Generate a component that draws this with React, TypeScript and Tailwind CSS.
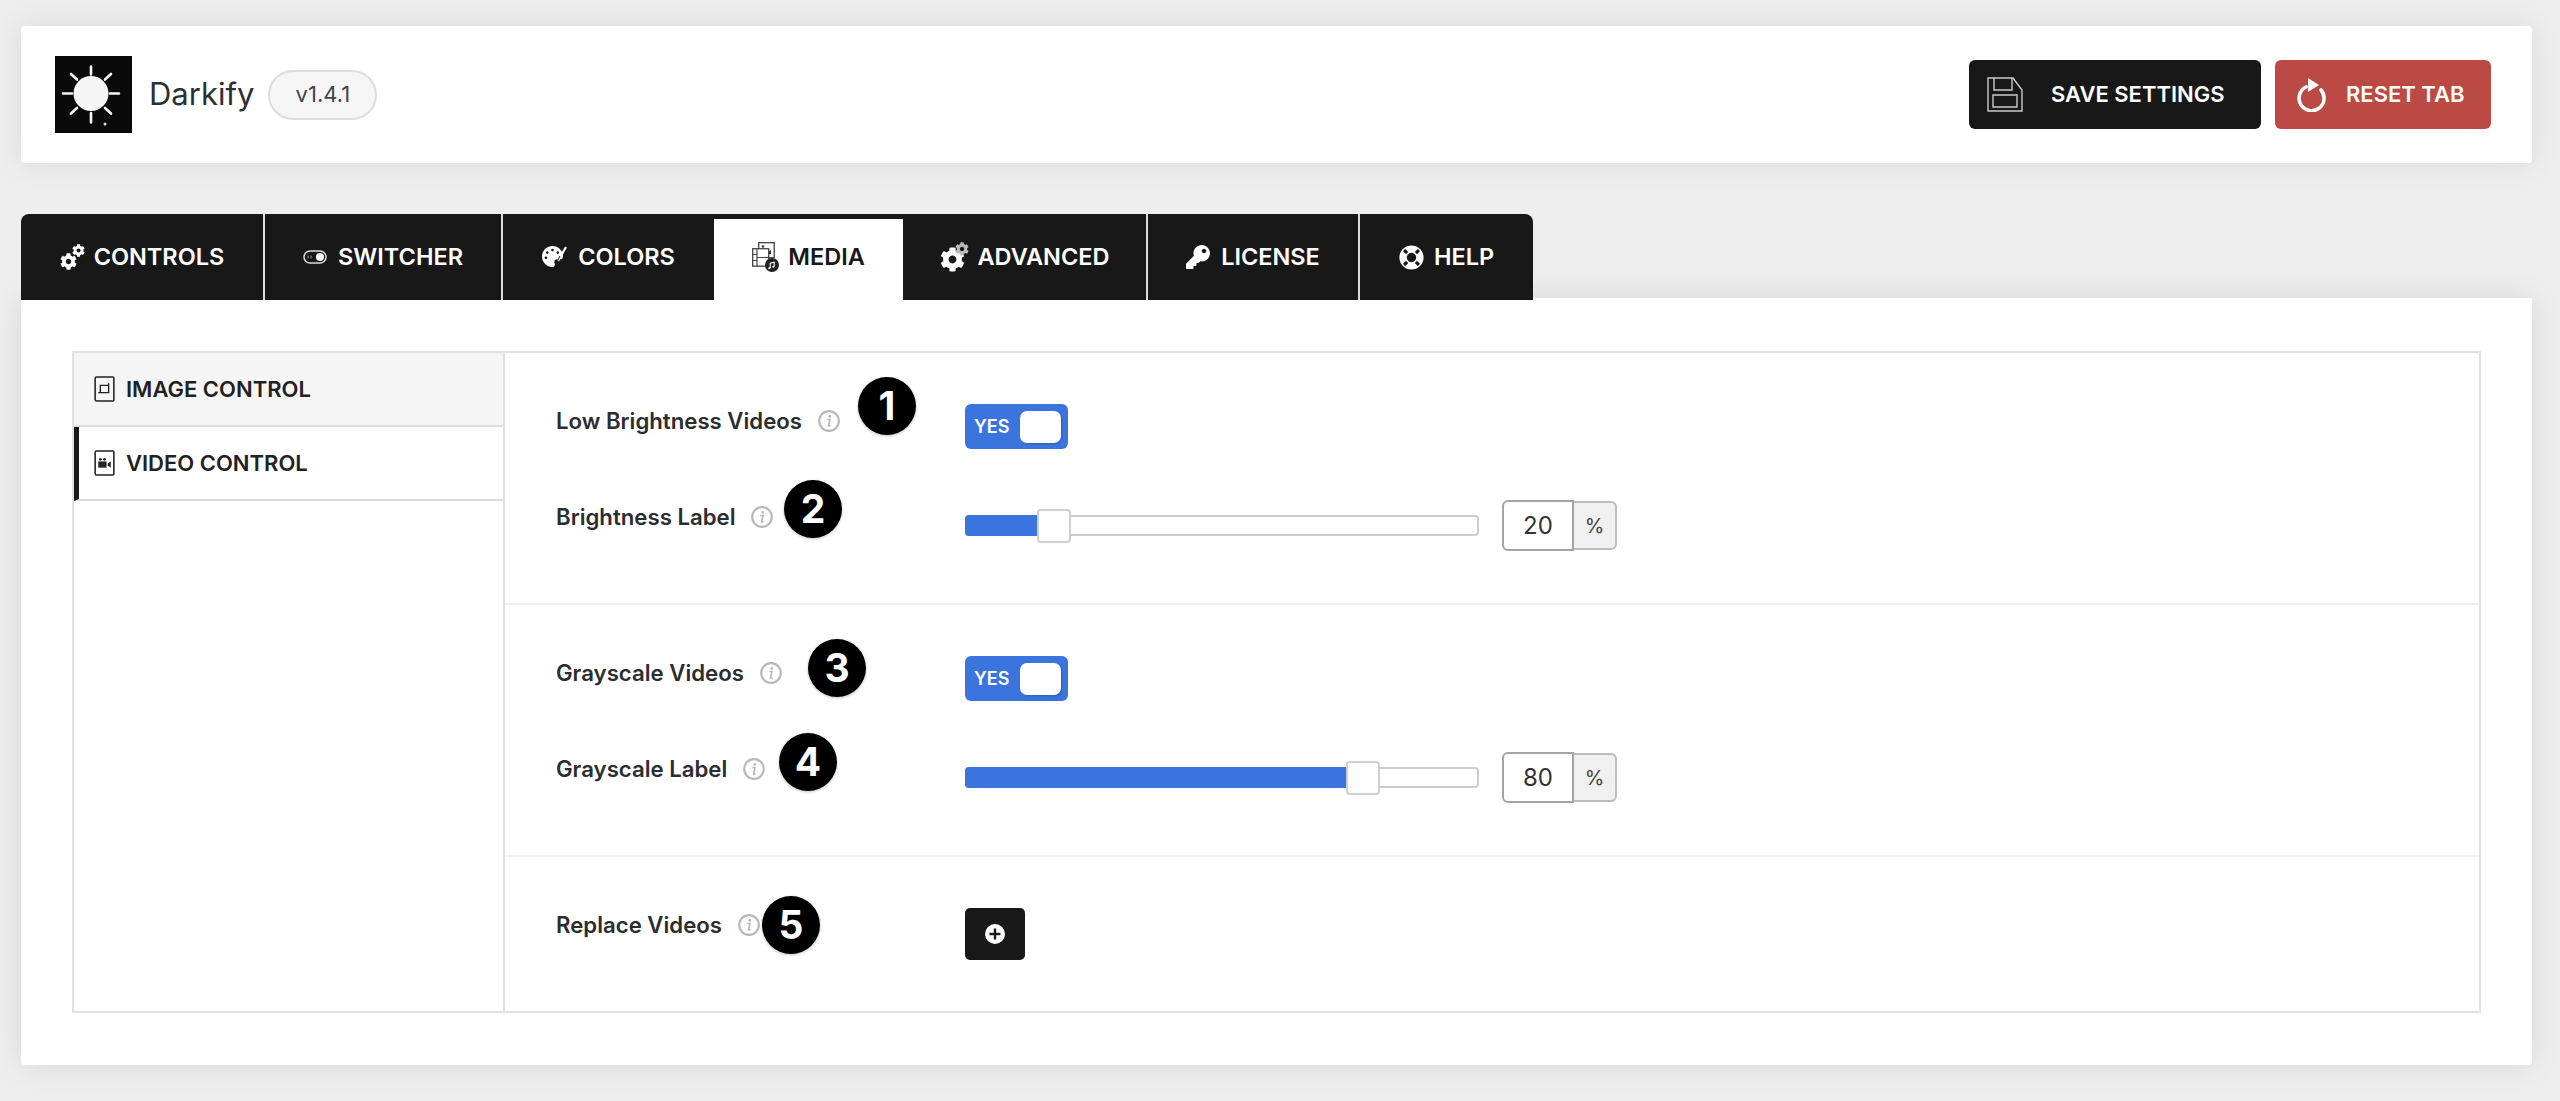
import React from "react";
import { FaCog, FaKey, FaLifeRing, FaPalette } from "react-icons/fa";

const SunLogo = () => (
  <svg viewBox="0 0 77 77" className="w-[77px] h-[77px] shrink-0 bg-[#0a0a0a]">
    <circle cx="36" cy="37.500" r="17.500" fill="#f5f5f5" />
    <g stroke="#f5f5f5" strokeWidth="2.600" strokeLinecap="round">
      <path d="M36 10.500v8M36 57v9.500M8 37.500h9M55 37.500h9M16 18l6 5.500M50 52l6 5.500M56 18l-6 5.500M22 52l-6 5.500" />
    </g>
    <circle cx="50" cy="68" r="1.500" fill="#ddd" />
  </svg>
);

const SaveIcon = () => (
  <svg viewBox="0 0 36 35" className="w-[36px] h-[35px]" fill="none" stroke="#c9c9c9" strokeWidth="1.400">
    <path d="M1 1h25l9 12v21H1z" />
    <path d="M7 1v12h18V1M6 18h24v12H6z" />
  </svg>
);

const ResetIcon = () => (
  <svg viewBox="0 0 32 34" className="w-[32px] h-[34px]" fill="none">
    <path d="M11 9a12.500 12.500 0 1 0 15 3" stroke="#fff" strokeWidth="3.600" strokeLinecap="round" />
    <path d="M13 0l11 7-11 7z" fill="#fff" />
  </svg>
);

const TwoGears = () => (
  <span className="relative block w-[25px] h-[26px]">
    <FaCog className="absolute left-0 bottom-0 text-[17px]" />
    <FaCog className="absolute right-0 top-0 text-[13px]" />
  </span>
);

const SwitchIcon = () => (
  <svg viewBox="0 0 24 14" className="w-[24px] h-[14px]" fill="none">
    <rect x="1" y="1" width="22" height="12" rx="6" stroke="#ddd" strokeWidth="1.500" />
    <circle cx="17" cy="7" r="4" fill="#fff" />
    <path d="M5 5.500v3M8 5.500v3" stroke="#999" />
  </svg>
);

const PaletteIcon = () => (
  <span className="relative block w-[25px] h-[22px]">
    <FaPalette className="absolute left-0 top-0 text-[21px]" />
    <svg viewBox="0 0 12 20" className="absolute right-0 top-0 w-[12px] h-[20px]" fill="none">
      <path d="M11 1L3 15" stroke="#fff" strokeWidth="2.200" />
      <path d="M5 10L1 18" stroke="#181818" strokeWidth="1" />
    </svg>
  </span>
);

const MediaIcon = () => (
  <svg viewBox="0 0 27 30" className="w-[27px] h-[30px]">
    <rect x="6.700" y="0.700" width="15.500" height="15" fill="#fff" stroke="#444" strokeWidth="1.300" />
    <path d="M9 12l4-5 3 3 3-2v4z" fill="#333" />
    <circle cx="11" cy="4.500" r="1.300" fill="#333" />
    <rect x="0.700" y="6.700" width="16" height="17.500" fill="#fff" stroke="#444" strokeWidth="1.300" />
    <path d="M5 7v17M0.700 12.500h4M0.700 18.500h4M5 15.500h11.700" stroke="#444" strokeWidth="1.200" />
    <circle cx="20" cy="23" r="7" fill="#222" />
    <path d="M18.200 26.300v-5l4-1v4.500" fill="none" stroke="#fff" strokeWidth="1.100" />
    <circle cx="17.200" cy="26.300" r="1" fill="#fff" />
    <circle cx="21.200" cy="24.800" r="1" fill="#fff" />
  </svg>
);

const AdvancedIcon = () => (
  <span className="relative block w-[29px] h-[30px]">
    <FaCog className="absolute left-0 bottom-0 text-[25px]" />
    <FaCog className="absolute right-0 top-0 text-[14px] text-[#bbb]" />
  </span>
);

const InfoIcon = () => (
  <svg viewBox="0 0 22 22" className="w-[22px] h-[22px] shrink-0" fill="none">
    <circle cx="11" cy="11" r="9.800" stroke="#b9b9b9" strokeWidth="2.200" />
    <circle cx="11.800" cy="6.400" r="1.400" fill="#b9b9b9" />
    <path d="M9.300 9.500h2.600l-1.300 6.300h1.900" stroke="#b9b9b9" strokeWidth="1.700" />
  </svg>
);

const DocIcon = ({ video }: { video?: boolean }) => (
  <svg viewBox="0 0 20 25" className="w-[21px] h-[26px] shrink-0" fill="none">
    <path d="M2.500 1H18a1 1 0 0 1 1 1v21a1 1 0 0 1-1 1H2.500A1.500 1.500 0 0 1 1 22.500V2.500A1.500 1.500 0 0 1 2.500 1z" stroke="#222" strokeWidth="1.500" />
    {video ? (
      <g fill="#222">
        <rect x="4" y="11" width="8" height="6" />
        <circle cx="6" cy="9" r="1.300" />
        <circle cx="10" cy="9" r="1.300" />
        <path d="M13 13l3-2v6l-3-2z" />
      </g>
    ) : (
      <path d="M6 9h8v7H6zM4 16h2M14 9V7" stroke="#222" strokeWidth="1.300" />
    )}
  </svg>
);

const tabs = [
  { label: "CONTROLS", icon: <TwoGears />, width: "w-[244px]", gap: "gap-[9px]" },
  { label: "SWITCHER", icon: <SwitchIcon />, width: "w-[238px]", gap: "gap-[11px]" },
  { label: "COLORS", icon: <PaletteIcon />, width: "w-[211px]", gap: "gap-[11px]" },
  { label: "MEDIA", icon: <MediaIcon />, width: "w-[189px]", gap: "gap-[9px]", active: true },
  { label: "ADVANCED", icon: <AdvancedIcon />, width: "w-[245px]", gap: "gap-[9px]" },
  { label: "LICENSE", icon: <FaKey className="text-[24px]" />, width: "w-[212px]", gap: "gap-[11px]" },
  { label: "HELP", icon: <FaLifeRing className="text-[25px]" />, width: "w-[173px]", gap: "gap-[10px]" },
];

const Badge = ({ n, pos }: { n: number; pos: string }) => (
  <span className={`absolute ${pos} w-[58px] h-[58px] rounded-full bg-black text-white flex items-center justify-center text-[39px] font-bold shadow-[0_1px_3px_rgba(0,0,0,0.25)]`}>
    {n}
  </span>
);

const Label = ({ text, n, pos }: { text: string; n: number; pos: string }) => (
  <div className="relative w-[409px] h-[34px] flex items-center gap-[16px] text-[22.200px] font-semibold text-[#2b2d2f] shrink-0">
    <span>{text}</span>
    <InfoIcon />
    <Badge n={n} pos={pos} />
  </div>
);

const Toggle = () => (
  <div className="w-[103px] h-[45px] rounded-[6px] bg-[#3b74dc] flex items-center pl-[9px] pr-[7px] justify-between">
    <span className="text-white text-[18px] font-semibold">YES</span>
    <span className="w-[41px] h-[32px] rounded-[7px] bg-white shadow-[1px_1px_2px_rgba(0,0,0,0.2)]" />
  </div>
);

const Slider = ({ value, fill, knob }: { value: number; fill: string; knob: string }) => (
  <div className="flex items-center h-[51px]">
    <div className="relative w-[514px] h-[21px] rounded-[4px] border-2 border-[#cccccc] bg-white">
      <div className={`absolute -left-[2px] -top-[2px] -bottom-[2px] ${fill} rounded-l-[4px] bg-[#3b74dc]`} />
      <div className={`absolute ${knob} -top-[8px] w-[34px] h-[34px] rounded-[4px] border-2 border-[#cfcfcf] bg-white`} />
    </div>
    <div className="ml-[23px] w-[72px] h-[51px] rounded-l-[6px] border-2 border-[#a5a5a5] bg-white flex items-center justify-center text-[24px] text-[#333]">
      {value}
    </div>
    <div className="w-[43px] h-[49px] rounded-r-[6px] border-2 border-l-0 border-[#bdbdbd] bg-[#f0f0f0] flex items-center justify-center text-[20px] text-[#444]">
      %
    </div>
  </div>
);

const App: React.FC = () => {
  return (
    <div className="h-[1101px] overflow-hidden bg-[#eeeeee] pt-[26px] pl-[21px] pr-[28px] font-['Inter',sans-serif]">
      <header className="h-[137px] bg-white rounded-[4px] shadow-[0_0_30px_rgba(0,0,0,0.09)] flex items-center justify-between pl-[34px] pr-[41px]">
        <div className="flex items-center">
          <SunLogo />
          <span className="ml-[17px] text-[31px] text-[#2c2f33]">Darkify</span>
          <span className="ml-[14px] w-[109px] h-[50px] rounded-full border-2 border-[#dddddd] bg-[#f6f6f6] flex items-center justify-center text-[22px] text-[#444]">
            v1.4.1
          </span>
        </div>
        <div className="flex gap-[14px]">
          <button className="w-[292px] h-[69px] rounded-[6px] bg-[#181818] flex items-center pl-[18px] text-white text-[22px] font-semibold">
            <SaveIcon />
            <span className="ml-[28px]">SAVE SETTINGS</span>
          </button>
          <button className="w-[216px] h-[69px] rounded-[6px] bg-[#bb4a44] flex items-center pl-[20px] text-white text-[22px] font-semibold">
            <ResetIcon />
            <span className="ml-[19px]">RESET TAB</span>
          </button>
        </div>
      </header>

      <nav className="relative z-10 mt-[51px] h-[86px] flex w-fit text-[23.500px] font-semibold">
        {tabs.map((tab, i) => (
          <div
            key={tab.label}
            className={`${tab.width} ${tab.gap} flex items-center justify-center ${
              tab.active
                ? "bg-white text-[#181818] border-t-[5px] border-[#181818] pb-[5px]"
                : "bg-[#181818] text-white"
            } ${i < tabs.length - 1 && !tab.active && !tabs[i + 1].active ? "border-r-2 border-[#dddddd]" : ""} ${i === 0 ? "rounded-tl-[8px]" : ""} ${i === tabs.length - 1 ? "rounded-tr-[8px]" : ""}`}
          >
            {tab.icon}
            <span>{tab.label}</span>
          </div>
        ))}
      </nav>

      <main className="-mt-[2px] h-[767px] bg-white rounded-b-[4px] shadow-[0_0_30px_rgba(0,0,0,0.1)] px-[51px] pt-[53px]">
        <div className="h-[662px] border-2 border-[#dfe1e3] flex">
          <aside className="w-[431px] shrink-0 border-r-2 border-[#dfdfdf] text-[22px] font-semibold text-[#1f2124]">
            <div className="h-[74px] bg-[#f5f5f5] border-b-2 border-[#dddddd] flex items-center gap-[11px] pl-[20px]">
              <DocIcon />
              <span>IMAGE CONTROL</span>
            </div>
            <div className="h-[74px] bg-white border-b-2 border-[#dddddd] border-l-[5px] border-l-[#181818] flex items-center gap-[11px] pl-[15px]">
              <DocIcon video />
              <span>VIDEO CONTROL</span>
            </div>
          </aside>

          <section className="flex-1">
            <div className="h-[252px] border-b-2 border-[#efefef] pl-[51px] pt-[51px]">
              <div className="flex h-[45px]">
                <Label text="Low Brightness Videos" n={1} pos="left-[302px] -top-[27px]" />
                <Toggle />
              </div>
              <div className="flex mt-[51px]">
                <Label text="Brightness Label" n={2} pos="left-[228px] -top-[20px]" />
                <Slider value={20} fill="w-[74px]" knob="left-[70px]" />
              </div>
            </div>
            <div className="h-[252px] border-b-2 border-[#efefef] pl-[51px] pt-[51px]">
              <div className="flex h-[45px]">
                <Label text="Grayscale Videos" n={3} pos="left-[252px] -top-[17px]" />
                <Toggle />
              </div>
              <div className="flex mt-[51px]">
                <Label text="Grayscale Label" n={4} pos="left-[223px] -top-[19px]" />
                <Slider value={80} fill="w-[381px]" knob="left-[379px]" />
              </div>
            </div>
            <div className="pl-[51px] pt-[51px] flex">
              <Label text="Replace Videos" n={5} pos="left-[206px] -top-[12px]" />
              <button className="w-[60px] h-[52px] rounded-[5px] bg-[#181818] flex items-center justify-center">
                <svg viewBox="0 0 20 20" className="w-[20px] h-[20px]">
                  <circle cx="10" cy="10" r="10" fill="#fff" />
                  <path d="M10 4.500v11M4.500 10h11" stroke="#181818" strokeWidth="2.400" />
                </svg>
              </button>
            </div>
          </section>
        </div>
      </main>
    </div>
  );
};

export default App;
